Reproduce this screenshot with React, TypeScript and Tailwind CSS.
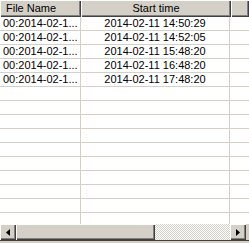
const rows = [
  { file: '00:2014-02-1...', start: '2014-02-11 14:50:29' },
  { file: '00:2014-02-1...', start: '2014-02-11 14:52:05' },
  { file: '00:2014-02-1...', start: '2014-02-11 15:48:20' },
  { file: '00:2014-02-1...', start: '2014-02-11 16:48:20' },
  { file: '00:2014-02-1...', start: '2014-02-11 17:48:20' },
];

const emptyRows = Array.from({ length: 9 });

const raised =
  'bg-[#d4d0c8] shadow-[inset_1px_1px_0_#ffffff,inset_-1px_-1px_0_#404040,inset_-2px_-2px_0_#808080]';

const App = () => {
  return (
    <div
      className="w-[249px] h-[243px] bg-white flex flex-col overflow-hidden text-black text-[11px] leading-none"
      style={{ fontFamily: '"Liberation Sans", Arial, sans-serif' }}
    >
      <div className="flex-1 flex flex-col overflow-hidden">
        {/* header */}
        <div className="flex h-[17px] shrink-0">
          <div className={`w-[81px] flex items-center pl-[6px] ${raised}`}>File Name</div>
          <div className={`w-[150px] flex items-center justify-center ${raised}`}>Start time</div>
          <div className={`flex-1 ${raised}`} />
        </div>

        {/* data rows */}
        {rows.map((r, i) => (
          <div key={i} className="flex h-[14px] shrink-0 border-b border-[#d4d0c8]">
            <div className="w-[81px] flex items-center pl-[3px] border-r border-[#d4d0c8]">{r.file}</div>
            <div className="w-[149px] flex items-center justify-center border-r border-[#d4d0c8]">{r.start}</div>
            <div className="flex-1" />
          </div>
        ))}

        {emptyRows.map((_, i) => (
          <div key={i} className="flex h-[14px] shrink-0 border-b border-[#d4d0c8]">
            <div className="w-[81px] border-r border-[#d4d0c8]" />
            <div className="w-[149px] border-r border-[#d4d0c8]" />
            <div className="flex-1" />
          </div>
        ))}

        <div className="flex flex-1">
          <div className="w-[81px] border-r border-[#d4d0c8]" />
          <div className="w-[149px] border-r border-[#d4d0c8]" />
          <div className="flex-1" />
        </div>

        {/* horizontal scrollbar */}
        <div className="flex h-[16px] shrink-0 border-r-[3px] border-[#d4d0c8]">
          <div className={`w-[16px] flex items-center justify-center ${raised}`}>
            <svg width="4" height="7" viewBox="0 0 4 7">
              <polygon points="4,0 4,7 0,3.5" fill="#000" />
            </svg>
          </div>
          <div className={`w-[139px] ${raised}`} />
          <div className="flex-1 bg-[repeating-conic-gradient(#d4d0c8_0%_25%,#ffffff_0%_50%)] [background-size:2px_2px]" />
          <div className={`w-[16px] flex items-center justify-center ${raised}`}>
            <svg width="4" height="7" viewBox="0 0 4 7">
              <polygon points="0,0 0,7 4,3.5" fill="#000" />
            </svg>
          </div>
        </div>
      </div>
      <div className="h-[1px] shrink-0 bg-[#404040]" />
      <div className="h-[2px] shrink-0 bg-[#d4d0c8]" />
    </div>
  );
};

export default App;
